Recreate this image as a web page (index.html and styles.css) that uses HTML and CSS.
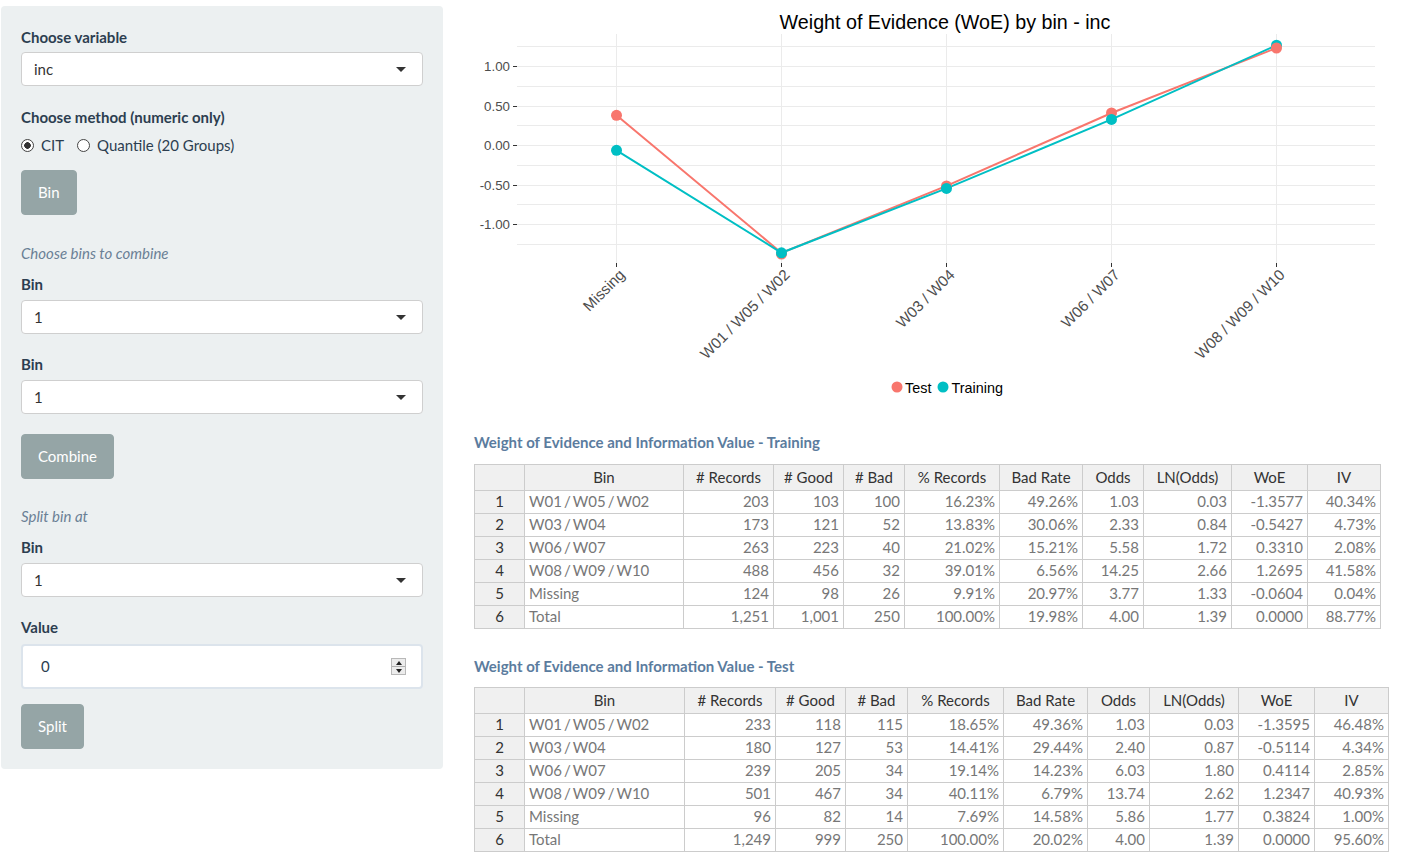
FILE: index.html
```html
<!DOCTYPE html>
<html lang="en">
<head>
<meta charset="utf-8">
<title>WoE binning</title>
<link rel="stylesheet" href="styles.css">
</head>
<body>
<div class="page">
  <aside class="sidebar">
    <div class="group first">
      <label class="ctl-label">Choose variable</label>
      <div class="select"><span>inc</span><i class="caret"></i></div>
    </div>
    <div class="group radio-group">
      <label class="ctl-label">Choose method (numeric only)</label>
      <div class="radios">
        <label class="radio"><span class="dot checked"></span>CIT</label>
        <label class="radio"><span class="dot"></span>Quantile (20 Groups)</label>
      </div>
    </div>
    <button class="btn btn-bin">Bin</button>
    <p class="note note-combine">Choose bins to combine</p>
    <div class="group">
      <label class="ctl-label">Bin</label>
      <div class="select"><span>1</span><i class="caret"></i></div>
    </div>
    <div class="group">
      <label class="ctl-label">Bin</label>
      <div class="select"><span>1</span><i class="caret"></i></div>
    </div>
    <button class="btn btn-combine">Combine</button>
    <p class="note note-split">Split bin at</p>
    <div class="group">
      <label class="ctl-label">Bin</label>
      <div class="select"><span>1</span><i class="caret"></i></div>
    </div>
    <div class="group value-group">
      <label class="ctl-label">Value</label>
      <div class="num-input"><span>0</span><span class="spinner"><i class="up"></i><i class="down"></i></span></div>
    </div>
    <button class="btn btn-split">Split</button>
  </aside>

  <main class="main">
    <svg class="chart" width="940" height="432" viewBox="459 0 940 432" xmlns="http://www.w3.org/2000/svg">
      <text x="945" y="29" class="c-title" text-anchor="middle">Weight of Evidence (WoE) by bin - inc</text>
      <g stroke="#ebebeb" stroke-width="1">
        <line x1="517" x2="1375" y1="46.5" y2="46.5"/>
        <line x1="517" x2="1375" y1="66.5" y2="66.5"/>
        <line x1="517" x2="1375" y1="86.5" y2="86.5"/>
        <line x1="517" x2="1375" y1="106.5" y2="106.5"/>
        <line x1="517" x2="1375" y1="125.5" y2="125.5"/>
        <line x1="517" x2="1375" y1="145.5" y2="145.5"/>
        <line x1="517" x2="1375" y1="165.5" y2="165.5"/>
        <line x1="517" x2="1375" y1="185.5" y2="185.5"/>
        <line x1="517" x2="1375" y1="204.5" y2="204.5"/>
        <line x1="517" x2="1375" y1="224.5" y2="224.5"/>
        <line x1="517" x2="1375" y1="244.5" y2="244.5"/>
        <line x1="616.5" x2="616.5" y1="34" y2="263"/>
        <line x1="781.5" x2="781.5" y1="34" y2="263"/>
        <line x1="946.5" x2="946.5" y1="34" y2="263"/>
        <line x1="1111.5" x2="1111.5" y1="34" y2="263"/>
        <line x1="1276.5" x2="1276.5" y1="34" y2="263"/>
      </g>
      <g stroke="#333" stroke-width="1">
        <line x1="513" x2="517" y1="66.5" y2="66.5"/>
        <line x1="513" x2="517" y1="106.5" y2="106.5"/>
        <line x1="513" x2="517" y1="145.5" y2="145.5"/>
        <line x1="513" x2="517" y1="185.5" y2="185.5"/>
        <line x1="513" x2="517" y1="224.5" y2="224.5"/>
        <line x1="616.5" x2="616.5" y1="263" y2="267"/>
        <line x1="781.5" x2="781.5" y1="263" y2="267"/>
        <line x1="946.5" x2="946.5" y1="263" y2="267"/>
        <line x1="1111.5" x2="1111.5" y1="263" y2="267"/>
        <line x1="1276.5" x2="1276.5" y1="263" y2="267"/>
      </g>
      <g class="c-ylab" text-anchor="end">
        <text x="510" y="71.3">1.00</text>
        <text x="510" y="111.3">0.50</text>
        <text x="510" y="150.3">0.00</text>
        <text x="510" y="190.3">-0.50</text>
        <text x="510" y="229.3">-1.00</text>
      </g>
      <g class="c-xlab" text-anchor="end">
        <text transform="translate(618,268) rotate(-45)" dy="0.72em">Missing</text>
        <text transform="translate(783,268) rotate(-45)" dy="0.72em">W01 / W05 / W02</text>
        <text transform="translate(948,268) rotate(-45)" dy="0.72em">W03 / W04</text>
        <text transform="translate(1113,268) rotate(-45)" dy="0.72em">W06 / W07</text>
        <text transform="translate(1278,268) rotate(-45)" dy="0.72em">W08 / W09 / W10</text>
      </g>
      <polyline fill="none" stroke="#F8766D" stroke-width="2" points="616.5,115.3 781.5,252.9 946.5,185.9 1111.5,113 1276.5,48"/>
      <polyline fill="none" stroke="#00BFC4" stroke-width="2" points="616.5,150.3 781.5,252.8 946.5,188.4 1111.5,119.4 1276.5,45.2"/>
      <g fill="#F8766D">
        <circle cx="616.5" cy="115.3" r="5.5"/>
        <circle cx="781.5" cy="254" r="5.5"/>
        <circle cx="946.5" cy="185.9" r="5.5"/>
        <circle cx="1111.5" cy="113" r="5.5"/>
      </g>
      <g fill="#00BFC4">
        <circle cx="616.5" cy="150.3" r="5.5"/>
        <circle cx="781.5" cy="252.8" r="5.5"/>
        <circle cx="946.5" cy="188.4" r="5.5"/>
        <circle cx="1111.5" cy="119.4" r="5.5"/>
        <circle cx="1276.5" cy="45.2" r="5.5"/>
      </g>
      <circle cx="1276.5" cy="48" r="5.5" fill="#F8766D"/>
      <circle cx="897" cy="387" r="5.5" fill="#F8766D"/>
      <text x="905" y="392.5" class="c-leg">Test</text>
      <circle cx="943" cy="387" r="5.5" fill="#00BFC4"/>
      <text x="951.5" y="392.5" class="c-leg">Training</text>
    </svg>

    <section class="tables">
      <h4 class="tbl-title">Weight of Evidence and Information Value - Training</h4>
      <table class="woe woe-train">
        <colgroup><col><col><col><col><col><col><col><col><col><col><col></colgroup>
        <thead>
          <tr><th></th><th>Bin</th><th># Records</th><th># Good</th><th># Bad</th><th>% Records</th><th>Bad Rate</th><th>Odds</th><th>LN(Odds)</th><th>WoE</th><th>IV</th></tr>
        </thead>
        <tbody>
          <tr><th>1</th><td class="txt">W01 / W05 / W02</td><td>203</td><td>103</td><td>100</td><td>16.23%</td><td>49.26%</td><td>1.03</td><td>0.03</td><td>-1.3577</td><td>40.34%</td></tr>
          <tr><th>2</th><td class="txt">W03 / W04</td><td>173</td><td>121</td><td>52</td><td>13.83%</td><td>30.06%</td><td>2.33</td><td>0.84</td><td>-0.5427</td><td>4.73%</td></tr>
          <tr><th>3</th><td class="txt">W06 / W07</td><td>263</td><td>223</td><td>40</td><td>21.02%</td><td>15.21%</td><td>5.58</td><td>1.72</td><td>0.3310</td><td>2.08%</td></tr>
          <tr><th>4</th><td class="txt">W08 / W09 / W10</td><td>488</td><td>456</td><td>32</td><td>39.01%</td><td>6.56%</td><td>14.25</td><td>2.66</td><td>1.2695</td><td>41.58%</td></tr>
          <tr><th>5</th><td class="txt">Missing</td><td>124</td><td>98</td><td>26</td><td>9.91%</td><td>20.97%</td><td>3.77</td><td>1.33</td><td>-0.0604</td><td>0.04%</td></tr>
          <tr><th>6</th><td class="txt">Total</td><td>1,251</td><td>1,001</td><td>250</td><td>100.00%</td><td>19.98%</td><td>4.00</td><td>1.39</td><td>0.0000</td><td>88.77%</td></tr>
        </tbody>
      </table>

      <h4 class="tbl-title second">Weight of Evidence and Information Value - Test</h4>
      <table class="woe woe-test">
        <colgroup><col><col><col><col><col><col><col><col><col><col><col></colgroup>
        <thead>
          <tr><th></th><th>Bin</th><th># Records</th><th># Good</th><th># Bad</th><th>% Records</th><th>Bad Rate</th><th>Odds</th><th>LN(Odds)</th><th>WoE</th><th>IV</th></tr>
        </thead>
        <tbody>
          <tr><th>1</th><td class="txt">W01 / W05 / W02</td><td>233</td><td>118</td><td>115</td><td>18.65%</td><td>49.36%</td><td>1.03</td><td>0.03</td><td>-1.3595</td><td>46.48%</td></tr>
          <tr><th>2</th><td class="txt">W03 / W04</td><td>180</td><td>127</td><td>53</td><td>14.41%</td><td>29.44%</td><td>2.40</td><td>0.87</td><td>-0.5114</td><td>4.34%</td></tr>
          <tr><th>3</th><td class="txt">W06 / W07</td><td>239</td><td>205</td><td>34</td><td>19.14%</td><td>14.23%</td><td>6.03</td><td>1.80</td><td>0.4114</td><td>2.85%</td></tr>
          <tr><th>4</th><td class="txt">W08 / W09 / W10</td><td>501</td><td>467</td><td>34</td><td>40.11%</td><td>6.79%</td><td>13.74</td><td>2.62</td><td>1.2347</td><td>40.93%</td></tr>
          <tr><th>5</th><td class="txt">Missing</td><td>96</td><td>82</td><td>14</td><td>7.69%</td><td>14.58%</td><td>5.86</td><td>1.77</td><td>0.3824</td><td>1.00%</td></tr>
          <tr><th>6</th><td class="txt">Total</td><td>1,249</td><td>999</td><td>250</td><td>100.00%</td><td>20.02%</td><td>4.00</td><td>1.39</td><td>0.0000</td><td>95.60%</td></tr>
        </tbody>
      </table>
    </section>
  </main>
</div>
</body>
</html>
```

FILE: styles.css
```css
* { box-sizing: border-box; }

body {
  margin: 0;
  font-family: Lato, "Noto Sans", sans-serif;
  font-size: 15px;
  line-height: 21px;
  color: #2c3e50;
  background: #fff;
}

.page {
  display: flex;
  align-items: flex-start;
}

/* ---------- sidebar ---------- */
.sidebar {
  width: 442px;
  margin: 6px 0 0 1px;
  padding: 21px 20px 20px 20px;
  background: #ecf0f1;
  border-radius: 4px;
  display: flex;
  flex-direction: column;
  align-items: flex-start;
}

.group {
  width: 100%;
  margin-bottom: 20px;
}

.group.first {
  margin-bottom: 21px;
}

.ctl-label {
  display: block;
  font-weight: 700;
  margin-bottom: 5px;
}

.group.first .ctl-label {
  margin-bottom: 4px;
}

.select {
  height: 34px;
  background: #fff;
  border: 1px solid #cfcfcf;
  border-radius: 4px;
  padding: 0 15px 0 12px;
  display: flex;
  align-items: center;
  justify-content: space-between;
  color: #333;
}

.caret {
  width: 0;
  height: 0;
  border-style: solid;
  border-width: 5px 5px 0 5px;
  border-color: #333 transparent transparent transparent;
  margin-right: 1px;
}

.radio-group {
  margin-bottom: 14px;
}

.radio-group .ctl-label {
  margin-bottom: 7px;
}

.radios {
  display: flex;
  gap: 13px;
}

.radio {
  display: flex;
  align-items: center;
  gap: 7px;
}

.dot {
  width: 13px;
  height: 13px;
  border-radius: 50%;
  border: 1px solid #444;
  background: #fff;
}

.dot.checked {
  background: radial-gradient(circle, #333 0 3px, #fff 3.6px);
}

.btn {
  font-family: inherit;
  font-size: 15px;
  line-height: 21px;
  color: #fff;
  background: #95a5a6;
  border: 1px solid #95a5a6;
  border-radius: 4px;
  padding: 11px 16px;
  height: 45px;
}

.btn-bin { margin-bottom: 28px; }
.btn-combine { margin-bottom: 27px; }

.note {
  margin: 0 0 10px 0;
  font-style: italic;
  color: #6a7f95;
}

.value-group {
  margin-bottom: 15px;
}

.value-group .ctl-label {
  margin-bottom: 6px;
}

.num-input {
  height: 45px;
  background: #fff;
  border: 2px solid #dce4ec;
  border-radius: 4px;
  padding: 0 15px 0 18px;
  display: flex;
  align-items: center;
  justify-content: space-between;
  color: #2c3e50;
}

.spinner {
  width: 15px;
  height: 17px;
  display: flex;
  flex-direction: column;
  border: 1px solid #b8b8b8;
  background: #ececec;
}

.spinner i {
  flex: 1;
  display: flex;
  align-items: center;
  justify-content: center;
}

.spinner .up { border-bottom: 1px solid #b0b0b0; }

.spinner .up::before {
  content: "";
  border-style: solid;
  border-width: 0 3px 4px 3px;
  border-color: transparent transparent #222 transparent;
}

.spinner .down::before {
  content: "";
  border-style: solid;
  border-width: 4px 3px 0 3px;
  border-color: #222 transparent transparent transparent;
}

/* ---------- main ---------- */
.main {
  margin-left: 16px;
  flex: 1;
}

.chart {
  display: block;
}

.c-title {
  font-family: "Liberation Sans", Arial, sans-serif;
  font-size: 19.7px;
  fill: #000;
}

.c-ylab {
  font-family: "Liberation Sans", Arial, sans-serif;
  font-size: 13.3px;
  fill: #4d4d4d;
}

.c-xlab {
  font-family: "Liberation Sans", Arial, sans-serif;
  font-size: 15.2px;
  fill: #4d4d4d;
}

.c-leg {
  font-family: "Liberation Sans", Arial, sans-serif;
  font-size: 14.4px;
  fill: #000;
}

.tables {
  padding-left: 15px;
}

.tbl-title {
  margin: 0 0 11px 0;
  font-size: 15px;
  line-height: 21px;
  font-weight: 700;
  color: #5b7c9e;
}

.tbl-title.second {
  margin-top: 27px;
  margin-bottom: 10px;
}

.woe {
  border-collapse: collapse;
  table-layout: fixed;
  font-size: 15px;
}

.woe th,
.woe td {
  border: 1px solid #ccc;
  padding: 0 4px 1px 4px;
  white-space: nowrap;
  overflow: hidden;
}

.woe thead th {
  height: 26px;
  line-height: 24px;
  background: #f0f0f0;
  color: #333;
  font-weight: 400;
  text-align: center;
}

.woe tbody th {
  background: #f0f0f0;
  color: #333;
  font-weight: 400;
  text-align: center;
}

.woe td {
  height: 23px;
  line-height: 21px;
  color: #777;
  text-align: right;
}

.woe td.txt {
  text-align: left;
  word-spacing: -1.75px;
}

.woe-train { width: 907px; }
.woe-train col:nth-child(1) { width: 50px; }
.woe-train col:nth-child(2) { width: 159px; }
.woe-train col:nth-child(3) { width: 90px; }
.woe-train col:nth-child(4) { width: 70px; }
.woe-train col:nth-child(5) { width: 61px; }
.woe-train col:nth-child(6) { width: 95px; }
.woe-train col:nth-child(7) { width: 83px; }
.woe-train col:nth-child(8) { width: 61px; }
.woe-train col:nth-child(9) { width: 88px; }
.woe-train col:nth-child(10) { width: 76px; }
.woe-train col:nth-child(11) { width: 73px; }

.woe-test { width: 915px; }
.woe-test col:nth-child(1) { width: 50px; }
.woe-test col:nth-child(2) { width: 160px; }
.woe-test col:nth-child(3) { width: 91px; }
.woe-test col:nth-child(4) { width: 70px; }
.woe-test col:nth-child(5) { width: 62px; }
.woe-test col:nth-child(6) { width: 96px; }
.woe-test col:nth-child(7) { width: 84px; }
.woe-test col:nth-child(8) { width: 62px; }
.woe-test col:nth-child(9) { width: 89px; }
.woe-test col:nth-child(10) { width: 76px; }
.woe-test col:nth-child(11) { width: 74px; }
```
